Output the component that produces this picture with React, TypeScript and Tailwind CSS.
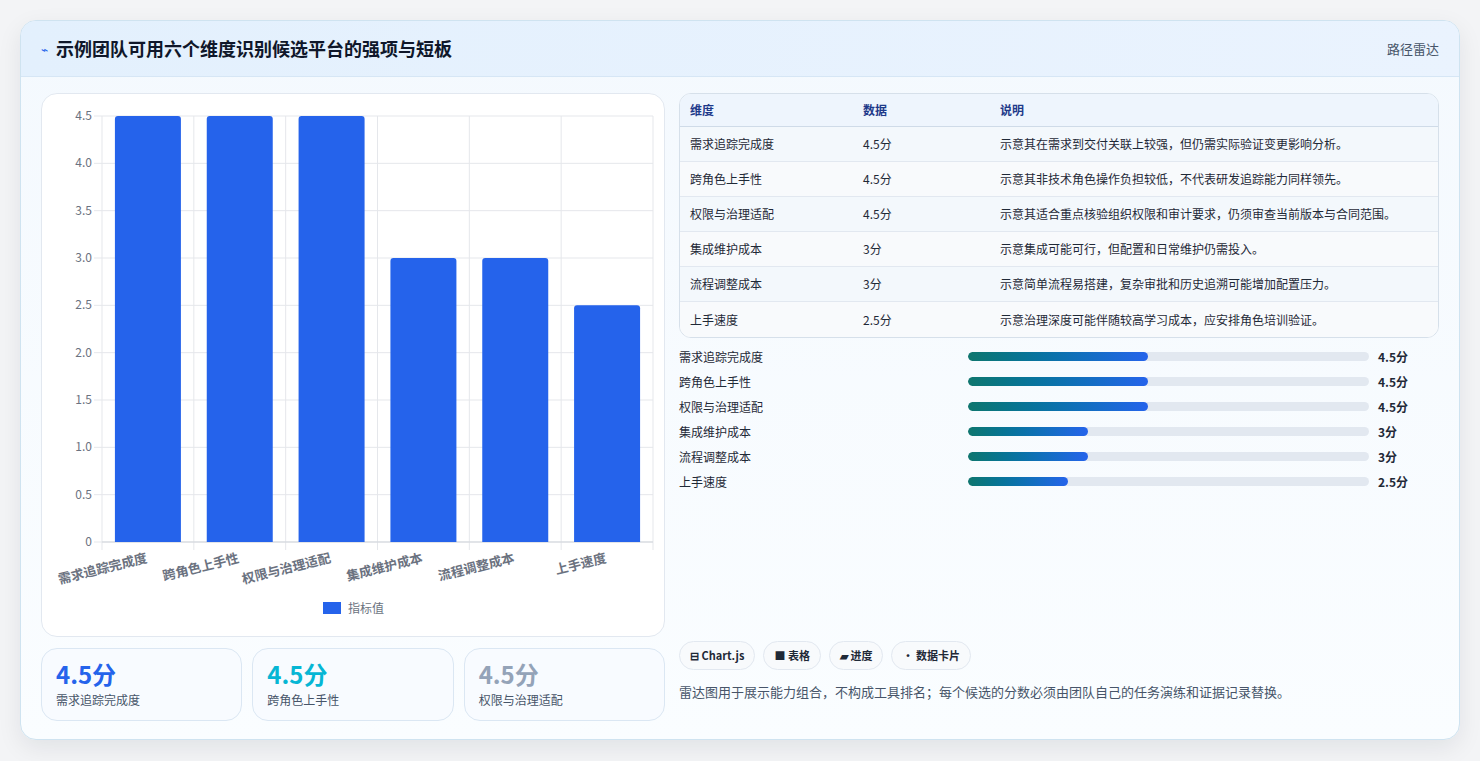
const font = { fontFamily: '"Noto Sans CJK SC", "Noto Sans", sans-serif' }

const dims = [
  { name: '需求追踪完成度', v: 4.5, note: '示意其在需求到交付关联上较强，但仍需实际验证变更影响分析。' },
  { name: '跨角色上手性', v: 4.5, note: '示意其非技术角色操作负担较低，不代表研发追踪能力同样领先。' },
  { name: '权限与治理适配', v: 4.5, note: '示意其适合重点核验组织权限和审计要求，仍须审查当前版本与合同范围。' },
  { name: '集成维护成本', v: 3, note: '示意集成可能可行，但配置和日常维护仍需投入。' },
  { name: '流程调整成本', v: 3, note: '示意简单流程易搭建，复杂审批和历史追溯可能增加配置压力。' },
  { name: '上手速度', v: 2.5, note: '示意治理深度可能伴随较高学习成本，应安排角色培训验证。' },
]

function BarChart() {
  const left = 60, right = 611, top = 22, bottom = 448
  const colW = (right - left) / 6
  const y = (v: number) => bottom - (v / 4.5) * (bottom - top)
  const ticks = [0, 0.5, 1, 1.5, 2, 2.5, 3, 3.5, 4, 4.5]
  return (
    <svg width="622" height="541" viewBox="0 0 622 541" className="block">
      {ticks.map((t) => (
        <g key={t}>
          <line x1={left - 8} x2={right} y1={y(t)} y2={y(t)} stroke="#e5e7eb" />
          <text x={50} y={y(t) + 4} textAnchor="end" fontSize="12" fill="#6b7280" style={font}>
            {t === 0 ? '0' : t.toFixed(1)}
          </text>
        </g>
      ))}
      {Array.from({ length: 7 }).map((_, i) => (
        <line key={i} x1={left + i * colW} x2={left + i * colW} y1={top} y2={bottom + 8} stroke="#e5e7eb" />
      ))}
      <line x1={left} x2={right} y1={bottom} y2={bottom} stroke="#d1d5db" />
      {dims.map((d, i) => {
        const cx = left + colW * i + colW / 2
        return (
          <g key={d.name}>
            <path
              d={`M${cx - 33} ${bottom} V${y(d.v) + 3} Q${cx - 33} ${y(d.v)} ${cx - 30} ${y(d.v)} H${cx + 30} Q${cx + 33} ${y(d.v)} ${cx + 33} ${y(d.v) + 3} V${bottom} Z`}
              fill="#2563eb"
            />
            <text
              x={cx}
              y={bottom + 20}
              textAnchor="end"
              fontSize="13"
              fontWeight="600"
              fill="#6b7280"
              transform={`rotate(-14 ${cx} ${bottom + 20})`}
              style={font}
            >
              {d.name}
            </text>
          </g>
        )
      })}
      <rect x={281} y={508} width={18} height={12} fill="#2563eb" />
      <text x={306} y={519} fontSize="12" fill="#6b7280" style={font}>指标值</text>
    </svg>
  )
}

export default function App() {
  return (
    <div className="min-h-[761px] bg-[#f3f4f6] pt-5 px-5" style={font}>
      <div className="h-[720px] rounded-2xl border border-[#cfe3f0] bg-gradient-to-b from-[#f4f9fe] to-[#fafdff] shadow-[0_8px_24px_rgba(15,23,42,0.08)] overflow-hidden">
        <div className="h-[56px] flex items-center justify-between px-5 bg-gradient-to-r from-[#e3f0fd] to-[#eaf3fe] border-b border-[#d6e6f5]">
          <div className="flex items-center gap-2">
            <span className="text-[#2563eb] text-[12px]">⌁</span>
            <h1 className="text-[18px] font-bold text-[#0f172a]">示例团队可用六个维度识别候选平台的强项与短板</h1>
          </div>
          <span className="text-[13px] text-[#475569]">路径雷达</span>
        </div>
        <div className="flex gap-[14px] px-5 pt-4">
          <div className="w-[624px] flex flex-col gap-[11px]">
            <div className="h-[544px] rounded-2xl border border-[#e2e8f0] bg-white">
              <BarChart />
            </div>
            <div className="grid grid-cols-3 gap-[10px]">
              {[
                ['需求追踪完成度', 'text-[#2563eb]'],
                ['跨角色上手性', 'text-[#06b6d4]'],
                ['权限与治理适配', 'text-[#94a3b8]'],
              ].map(([n, c]) => (
                <div key={n} className="h-[73px] rounded-2xl border border-[#dbe7f3] bg-[#f8fbff] px-[14px] pt-[10px]">
                  <div className={`text-[24px] font-bold leading-[30px] ${c}`}>4.5分</div>
                  <div className="text-[12px] text-[#475569] mt-[2px]">{n}</div>
                </div>
              ))}
            </div>
          </div>
          <div className="flex-1 flex flex-col">
            <div className="rounded-xl border border-[#d6e0ea] overflow-hidden bg-white">
              <div className="h-[33px] flex items-center bg-[#eef5fd] border-b border-[#cfdbe8] text-[12px] font-semibold text-[#1e3a8a]">
                <div className="w-[183px] pl-[10px]">维度</div>
                <div className="w-[137px]">数据</div>
                <div className="flex-1">说明</div>
              </div>
              {dims.map((d, i) => (
                <div
                  key={d.name}
                  className={`h-[35px] flex items-center text-[12px] text-[#1f2937] ${i % 2 ? 'bg-[#f8fafc]' : 'bg-[#f3f8fc]'} ${i < 5 ? 'border-b border-[#e2e8f0]' : ''}`}
                >
                  <div className="w-[183px] pl-[10px]">{d.name}</div>
                  <div className="w-[137px]">{d.v}分</div>
                  <div className="flex-1">{d.note}</div>
                </div>
              ))}
            </div>
            <div className="mt-[10px] flex flex-col gap-[8px]">
              {dims.map((d) => (
                <div key={d.name} className="h-[17px] flex items-center text-[12px] text-[#1f2937]">
                  <div className="w-[289px]">{d.name}</div>
                  <div className="w-[401px] h-[9px] rounded-full bg-[#e2e8f0] overflow-hidden">
                    <div
                      className="h-full rounded-full bg-gradient-to-r from-[#0f766e] to-[#2563eb]"
                      style={{ width: `${d.v * 10}%` }}
                    />
                  </div>
                  <div className="ml-[9px] font-bold">{d.v}分</div>
                </div>
              ))}
            </div>
            <div className="mt-auto flex gap-2">
              {['⊟ Chart.js', '■ 表格', '▰ 进度', '• 数据卡片'].map((t) => (
                <span key={t} className="h-[29px] px-[10px] flex items-center rounded-full border border-[#e2e8f0] bg-[#f8fafc] text-[11px] font-semibold text-[#1f2937]">
                  {t}
                </span>
              ))}
            </div>
            <p className="mt-[12px] mb-[20px] text-[13px] text-[#475569]">
              雷达图用于展示能力组合，不构成工具排名；每个候选的分数必须由团队自己的任务演练和证据记录替换。
            </p>
          </div>
        </div>
      </div>
    </div>
  )
}
